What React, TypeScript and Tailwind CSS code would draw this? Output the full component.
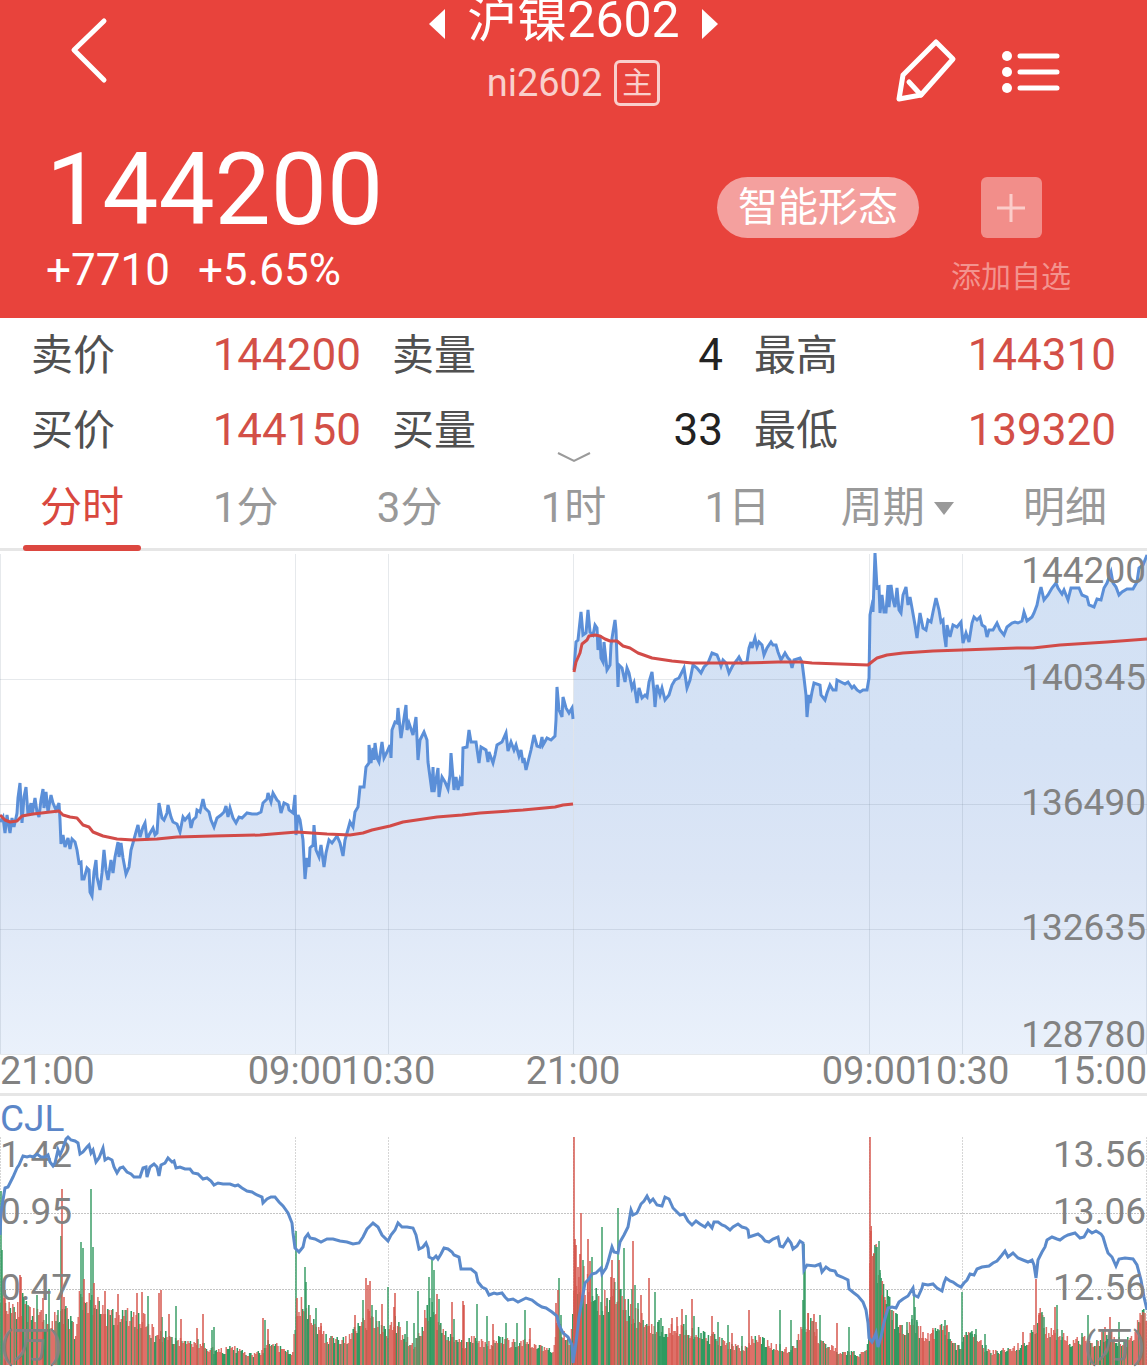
import React from 'react'
import clsx from 'clsx'

const quotes = [
  { label: '卖价', value: '144200', up: true },
  { label: '卖量', value: '4' },
  { label: '最高', value: '144310', up: true },
  { label: '买价', value: '144150', up: true },
  { label: '买量', value: '33' },
  { label: '最低', value: '139320', up: true },
]

const tabs = ['分时', '1分', '3分', '1时', '1日']

const priceLabels = [
  { y: 32, text: '144200' },
  { y: 139, text: '140345' },
  { y: 264, text: '136490' },
  { y: 389, text: '132635' },
  { y: 496, text: '128780' },
]

const timeLabels = [
  { x: 0, text: '21:00', anchor: 'start' },
  { x: 295, text: '09:00', anchor: 'middle' },
  { x: 388, text: '10:30', anchor: 'middle' },
  { x: 573, text: '21:00', anchor: 'middle' },
  { x: 869, text: '09:00', anchor: 'middle' },
  { x: 962, text: '10:30', anchor: 'middle' },
  { x: 1147, text: '15:00', anchor: 'end' },
] as const

const sessionLines = [0.5, 295.5, 388.5, 573.5, 869.5, 962.5, 1146.5]

const firstPrice =
  '0,271 3,266 5,282 7,264 10,282 12,267 14,276 17,262 18,247 20,232 22,272 24,246 26,236 28,264 31,252 32,264 35,247 37,261 39,266 41,249 43,238 44,257 46,241 48,261 51,244 53,252 56,259 59,252 60,269 61,293 63,284 65,296 68,287 70,298 72,288 75,291 77,299 79,312 81,311 82,328 84,328 87,317 89,319 90,341 92,345 94,321 96,309 97,326 100,339 102,322 104,299 106,319 108,329 111,309 113,322 115,306 118,291 119,306 121,292 123,307 126,323 129,316 131,299 133,292 136,281 138,274 140,286 143,276 145,272 147,289 149,284 153,277 155,284 157,282 159,252 162,267 164,269 167,262 168,254 171,266 173,271 177,273 180,281 183,266 185,269 189,264 191,277 193,269 196,266 197,259 200,261 203,248 205,257 209,261 211,269 214,276 217,267 221,264 224,261 226,255 228,266 230,257 233,267 236,272 239,266 242,267 247,262 252,263 257,263 261,261 263,252 267,248 268,242 271,251 273,242 277,249 279,251 281,262 284,252 288,254 289,259 293,262 295,244 296,284 298,264 300,269 303,289 305,328 307,307 309,316 310,297 313,294 314,274 316,299 319,306 321,294 324,316 326,302 329,289 332,292 337,285 340,292 343,305 345,289 347,282 350,271 353,276 355,261 358,256 360,236 364,236 366,216 369,212 369,194 371,212 373,197 374,209 375,192 377,207 379,211 382,191 384,207 387,201 390,194 391,207 392,179 395,171 397,172 398,157 401,187 403,174 406,154 407,179 409,172 413,184 416,166 418,209 420,189 424,181 427,189 428,211 430,226 432,241 433,216 434,241 438,217 439,246 442,226 445,231 448,238 450,224 451,202 454,239 456,226 458,239 460,229 462,235 463,197 467,196 469,179 471,191 476,191 479,212 481,196 486,199 488,211 489,201 493,212 495,204 497,194 502,191 506,182 508,200 511,191 514,199 516,194 519,205 521,199 523,212 524,207 526,219 529,207 531,199 534,184 537,195 540,196 542,186 543,194 547,187 551,189 555,185 556,169 557,136 559,159 562,166 563,146 566,157 569,162 572,157 573,168'

const secondPrice =
  '574,119 576,91 578,89 581,61 583,84 586,82 588,59 590,81 593,84 595,74 597,77 598,99 600,84 601,107 603,111 604,91 607,119 610,114 611,94 613,81 615,69 616,79 618,136 619,114 622,117 625,131 627,117 629,122 632,137 634,132 637,152 639,137 642,147 645,144 647,146 649,131 652,121 654,141 655,156 657,134 660,144 662,137 665,149 669,144 672,134 675,129 679,127 684,117 687,137 690,129 693,114 697,117 701,122 704,116 708,112 712,102 717,104 719,109 721,115 723,109 726,112 729,122 733,114 737,109 739,106 742,112 747,111 749,97 751,91 752,97 755,87 757,96 759,91 762,94 764,104 767,97 771,91 773,94 776,94 778,101 781,109 785,102 788,107 790,109 792,117 794,109 800,107 802,111 804,127 806,144 807,166 809,144 810,152 812,141 814,132 820,134 821,144 825,149 827,142 830,134 833,139 836,139 837,129 841,131 845,133 848,131 852,137 854,135 857,139 860,141 863,139 867,139 869,127 870,64 873,49 873,61 875,2 877,37 879,36 880,62 882,44 884,61 886,61 888,34 889,56 891,34 893,49 895,56 897,37 899,59 901,62 903,44 906,36 908,54 910,46 912,57 915,74 917,87 920,62 923,77 926,79 928,69 931,71 933,61 936,47 939,59 941,71 943,69 944,82 946,96 947,74 950,86 953,74 957,76 961,71 963,92 966,82 969,91 972,72 974,66 977,69 980,66 982,74 985,76 987,86 989,79 993,79 997,72 1000,79 1004,84 1007,76 1012,72 1015,71 1018,72 1022,70 1024,61 1027,70 1032,66 1034,62 1037,54 1039,44 1041,36 1044,49 1048,44 1052,37 1056,32 1058,37 1062,43 1064,39 1068,49 1071,37 1075,37 1079,37 1082,44 1087,46 1089,54 1094,56 1097,48 1101,49 1104,37 1107,32 1111,21 1113,32 1116,36 1119,44 1122,41 1127,38 1133,38 1137,31 1139,17 1143,14 1147,4'

const firstAverage =
  '0,264 5,269 10,271 17,270 22,265 33,263 50,261 59,260 63,264 70,266 77,267 83,274 89,276 93,281 103,285 117,288 133,289 157,288 177,286 213,285 260,284 297,281 327,283 350,284 363,282 372,279 390,275 403,271 437,266 462,264 480,262 523,259 555,256 563,254 573,253'

const secondAverage =
  '574,121 576,111 580,102 582,93 587,89 589,85 595,84 600,85 605,88 610,90 617,90 623,95 630,97 638,102 652,107 672,110 692,112 742,112 778,111 802,111 812,112 868,114 873,110 877,107 887,104 903,102 933,100 962,99 1017,97 1033,97 1060,94 1107,91 1147,88'

const openInterest =
  '0,139 1,117 3,104 5,92 8,91 13,81 17,72 19,69 23,60 27,61 30,60 33,61 37,58 41,61 45,61 48,59 50,66 53,70 55,67 58,54 60,59 63,52 66,43 68,41 71,44 75,45 78,47 80,58 83,56 87,51 89,49 91,57 93,54 96,66 99,62 103,52 105,64 108,62 112,64 114,71 117,77 120,72 123,71 127,76 131,78 134,81 140,81 143,72 146,71 147,81 150,71 154,68 157,71 159,80 161,69 165,67 168,62 172,66 174,65 176,72 180,71 185,73 190,73 193,77 198,78 203,83 207,82 211,85 214,89 218,87 223,88 230,88 235,90 238,89 242,92 247,95 252,96 257,99 262,101 263,107 267,103 271,101 275,101 279,106 283,110 288,117 292,127 293,137 295,152 299,156 303,151 305,142 308,138 310,142 315,143 321,146 327,143 333,143 340,145 347,146 353,148 359,147 363,141 367,133 370,130 373,127 378,131 382,139 388,145 391,139 395,134 398,127 402,131 407,131 413,132 416,139 419,153 423,151 426,147 428,152 429,161 433,163 436,160 438,163 441,158 444,152 448,153 452,156 454,159 459,161 461,173 467,173 471,173 476,177 478,186 482,191 486,193 489,199 494,197 497,198 502,197 505,201 508,204 513,203 518,206 526,202 532,204 537,208 542,211 546,212 552,216 557,220 559,229 563,237 568,241 572,249 573,267 576,247 579,221 582,204 585,187 588,184 592,178 596,177 601,172 602,178 606,172 608,166 612,151 614,156 618,157 620,146 624,139 628,131 631,114 633,119 637,117 641,108 644,105 647,100 650,106 653,103 657,109 662,110 665,101 669,103 673,112 677,116 680,119 684,118 688,125 692,129 696,125 700,128 705,131 708,127 712,132 714,126 718,126 722,129 725,130 730,134 733,131 738,128 742,131 746,132 748,134 749,141 752,140 758,138 762,141 765,145 769,146 773,143 778,141 780,150 783,151 788,143 791,147 793,153 797,150 800,145 803,147 804,174 807,169 815,170 820,168 822,176 826,171 830,174 835,175 837,179 842,181 848,184 849,193 854,197 858,200 863,206 866,214 868,227 869,242 872,246 874,242 876,237 878,251 881,241 884,226 888,212 892,211 896,212 899,206 903,203 908,200 913,192 914,199 918,201 922,192 923,188 928,189 933,188 937,192 942,195 944,187 946,182 950,185 953,186 957,189 961,191 964,187 967,184 970,178 974,179 977,173 982,171 989,170 993,167 997,165 1002,159 1005,155 1008,161 1013,157 1018,162 1023,164 1028,166 1032,164 1034,169 1036,182 1038,164 1042,156 1045,151 1047,144 1052,141 1057,143 1060,144 1064,141 1068,139 1075,137 1080,142 1084,141 1088,134 1092,137 1096,135 1101,138 1103,141 1106,151 1108,157 1112,161 1116,170 1119,163 1125,162 1133,163 1137,169 1141,184 1144,201 1147,214'

// x and usual bar height around it
const volumeTrend = [
  [0, 80], [5, 60], [15, 55], [20, 60], [30, 45], [60, 40], [65, 50], [75, 32],
  [80, 60], [90, 60], [100, 55], [110, 45], [130, 45], [145, 40], [155, 28],
  [165, 28], [180, 22], [200, 20], [215, 13], [235, 15], [250, 9], [262, 12],
  [270, 22], [285, 12], [293, 12], [296, 50], [305, 55], [315, 42], [325, 25],
  [345, 22], [360, 35], [370, 45], [385, 30], [395, 38], [405, 27], [413, 18],
  [420, 28], [430, 60], [438, 40], [450, 25], [465, 20], [475, 25], [490, 18],
  [500, 25], [510, 20], [530, 20], [545, 15], [553, 15], [558, 45], [563, 30],
  [570, 22], [573, 60], [576, 85], [585, 75], [600, 60], [620, 65], [630, 50],
  [645, 40], [660, 35], [680, 32], [695, 30], [715, 25], [730, 18], [745, 15],
  [755, 28], [770, 18], [785, 15], [795, 15], [804, 40], [812, 40], [820, 22],
  [840, 12], [860, 10], [868, 20], [871, 110], [880, 85], [890, 52], [900, 35],
  [915, 40], [925, 25], [945, 35], [957, 15], [970, 30], [980, 20], [990, 12],
  [1005, 13], [1020, 18], [1030, 25], [1040, 45], [1050, 30], [1060, 28],
  [1070, 20], [1085, 25], [1095, 18], [1105, 30], [1115, 25], [1125, 20],
  [1135, 30], [1147, 55],
]

const redSpikes = [
  [5, 75], [20, 90], [21, 88], [43, 67], [62, 176], [64, 68], [84, 86], [94, 82],
  [105, 74], [118, 71], [137, 72], [142, 73], [159, 72], [161, 75], [169, 51],
  [181, 46], [197, 37], [203, 51], [263, 47], [268, 36], [297, 67], [321, 42],
  [355, 50], [366, 87], [368, 80], [370, 84], [382, 61], [394, 58], [395, 72],
  [437, 71], [452, 63], [463, 64], [464, 60], [493, 41], [530, 37], [556, 62],
  [558, 75], [574, 228], [575, 126], [576, 120], [578, 98], [580, 111],
  [581, 152], [588, 126], [590, 104], [611, 88], [612, 105], [614, 87],
  [619, 105], [625, 66], [633, 124], [641, 70], [649, 87], [672, 47], [677, 48],
  [682, 56], [692, 66], [712, 49], [732, 32], [749, 55], [808, 52], [814, 51],
  [816, 43], [837, 42], [870, 228], [871, 134], [874, 112], [882, 70], [885, 65],
  [900, 40], [923, 33], [933, 35], [947, 40], [1023, 33], [1036, 86], [1039, 50],
  [1040, 52], [1055, 58], [1105, 38], [1110, 48], [1140, 42], [1143, 53],
]

const greenSpikes = [
  [1, 174], [2, 115], [28, 60], [37, 70], [49, 76], [58, 55], [61, 129],
  [81, 123], [83, 117], [91, 176], [93, 118], [126, 55], [148, 69], [162, 48],
  [176, 59], [212, 35], [214, 38], [265, 45], [296, 134], [305, 98], [306, 83],
  [316, 57], [363, 65], [372, 60], [376, 55], [388, 78], [407, 44], [414, 42],
  [418, 74], [429, 88], [432, 106], [434, 95], [439, 66], [454, 46], [477, 61],
  [487, 49], [506, 42], [517, 42], [525, 55], [559, 87], [561, 50], [583, 105],
  [592, 108], [597, 71], [602, 138], [607, 67], [618, 157], [624, 117],
  [632, 76], [635, 80], [638, 62], [655, 73], [661, 47], [686, 50], [694, 49],
  [718, 43], [728, 40], [742, 29], [764, 27], [780, 55], [791, 45], [803, 65],
  [804, 121], [805, 95], [820, 50], [849, 38], [876, 118], [877, 118], [879, 124],
  [880, 95], [888, 66], [892, 55], [907, 43], [912, 50], [914, 70], [915, 58],
  [917, 43], [939, 35], [945, 45], [962, 73], [972, 34], [976, 36], [985, 31],
  [1042, 53], [1044, 48], [1057, 60], [1062, 35], [1082, 32], [1088, 50],
  [1119, 43],
]

const VOLUME_BASE = 269

function trendAt(x: number) {
  const next = volumeTrend.findIndex(([px]) => px >= x)
  if (next <= 0) return volumeTrend[0][1]
  const [x0, h0] = volumeTrend[next - 1]
  const [x1, h1] = volumeTrend[next]
  return h0 + ((h1 - h0) * (x - x0)) / (x1 - x0)
}

function barPath(bars: number[][]) {
  return bars.map(([x, h]) => `M${x} ${VOLUME_BASE}v${-h}`).join('')
}

function buildVolume() {
  const red: number[][] = []
  const green: number[][] = []
  let seed = 11
  const random = () => {
    seed = (seed * 16807) % 2147483647
    return seed / 2147483647
  }
  // one bar a minute, 465 minutes in a trading day
  for (let i = 0; i < 930; i++) {
    const x = Math.round((i * 1147 * 100) / 930) / 100 + 0.5
    const height = trendAt(Math.min(x, 1147)) * (0.8 + random() * 0.5)
    const bar = [x, Math.round(height)]
    if (random() > 0.38) red.push(bar)
    else green.push(bar)
  }
  return { red: barPath(red), green: barPath(green) }
}

const volume = buildVolume()

function PriceChart() {
  return (
    <svg
      viewBox="0 0 1147 542"
      className="block w-full h-auto"
      role="img"
      aria-label="分时走势"
    >
      <defs>
        <linearGradient
          id="area"
          gradientUnits="userSpaceOnUse"
          x1="0"
          y1="0"
          x2="0"
          y2="503"
        >
          <stop offset="0" stopColor="#d2e1f4" />
          <stop offset="0.4" stopColor="#d5e2f5" />
          <stop offset="0.65" stopColor="#dce6f6" />
          <stop offset="1" stopColor="#eaf1fb" />
        </linearGradient>
      </defs>
      <polygon points={`0,503 ${firstPrice} 573,503`} fill="url(#area)" />
      <polygon points={`573,503 ${secondPrice} 1147,503`} fill="url(#area)" />
      <g stroke="#64748b" strokeOpacity="0.16" strokeWidth="1">
        {sessionLines.map((x) => (
          <line key={x} x1={x} x2={x} y1="3" y2="503" />
        ))}
        {[128.5, 253.5, 378.5, 503.5].map((y) => (
          <line key={y} x1="0" x2="1147" y1={y} y2={y} />
        ))}
      </g>
      <g fill="none" strokeWidth="3">
        <polyline points={firstPrice} stroke="#5b8fd8" />
        <polyline points={secondPrice} stroke="#5b8fd8" />
        <g stroke="#d24b48" strokeLinejoin="round">
          <polyline points={firstAverage} />
          <polyline points={secondAverage} />
        </g>
      </g>
      <g fill="#828282">
        <g fontSize="37" textAnchor="end">
          {priceLabels.map(({ y, text }) => (
            <text key={text} x="1146" y={y}>
              {text}
            </text>
          ))}
        </g>
        <g fontSize="38">
          {timeLabels.map(({ x, text, anchor }) => (
            <text key={x} x={x} y="533" textAnchor={anchor}>
              {text}
            </text>
          ))}
        </g>
      </g>
    </svg>
  )
}

function VolumeChart() {
  return (
    <svg
      viewBox="0 0 1147 273"
      className="block w-full h-auto"
      role="img"
      aria-label="成交量"
    >
      <g stroke="#c4c4c4" strokeWidth="1" strokeDasharray="2 1">
        {sessionLines.map((x) => (
          <line key={x} x1={x} x2={x} y1="41" y2="269" strokeOpacity="0.7" />
        ))}
        {[117.5, 193.5].map((y) => (
          <line key={y} x1="0" x2="1147" y1={y} y2={y} />
        ))}
      </g>
      <g fill="none" strokeWidth="1.5">
        <path d={volume.green} stroke="#2f9a60" />
        <path d={volume.red} stroke="#d64c42" strokeOpacity="0.8" />
        <path d={barPath(greenSpikes)} stroke="#3c9f68" />
        <path d={barPath(redSpikes)} stroke="#d6584f" />
      </g>
      <g fill="#828282" fontSize="37">
        <text x="0" y="71">1.42</text>
        <text x="0" y="128">0.95</text>
        <text x="0" y="204">0.47</text>
        <text x="0" y="262">(万)</text>
      </g>
      <polyline
        points={openInterest}
        fill="none"
        stroke="#5b8acb"
        strokeWidth="3"
      />
      <g fill="#828282" fontSize="37" textAnchor="end">
        <text x="1146" y="71">13.56</text>
        <text x="1146" y="128">13.06</text>
        <text x="1146" y="204">12.56</text>
        <text x="1146" y="262">(万)</text>
      </g>
      <text x="0" y="35" fill="#5b86c8" fontSize="37">CJL</text>
    </svg>
  )
}

function Header() {
  return (
    <header className="bg-[#e8433c] text-white pb-[26px]">
      <div className="grid grid-cols-[1fr_auto_1fr] items-start">
        <button aria-label="返回" className="justify-self-start pl-[70px] pt-4">
          <svg width="40" height="68" viewBox="0 0 40 68" fill="none">
            <path
              d="M34 5 4 34 34 64"
              stroke="currentColor"
              strokeWidth="5"
              strokeLinecap="round"
              strokeLinejoin="round"
            />
          </svg>
        </button>
        <div className="flex flex-col items-center gap-5">
          <div className="flex items-center h-10 gap-[22px]">
            <button aria-label="上一个" className="pt-2">
              <svg width="16" height="30" viewBox="0 0 16 30">
                <path d="M16 0 0 15l16 15z" fill="currentColor" />
              </svg>
            </button>
            <h1 className="text-[50px] leading-10 whitespace-nowrap">
              沪镍2602
            </h1>
            <button aria-label="下一个" className="pt-2">
              <svg width="16" height="30" viewBox="0 0 16 30">
                <path d="m0 0 16 15L0 30z" fill="currentColor" />
              </svg>
            </button>
          </div>
          <div className="flex items-center gap-3 text-[#f9cfcc]">
            <span className="text-[38px] leading-[46px]">ni2602</span>
            <span className="flex items-center justify-center w-[46px] h-[46px] text-[30px] leading-none border-[3px] border-[#f9cfcc] rounded-md">
              主
            </span>
          </div>
        </div>
        <div className="flex gap-11 justify-self-end pt-[38px] pr-[86px]">
          <button aria-label="画线">
            <svg width="62" height="66" viewBox="0 0 62 66" fill="none">
              <g stroke="currentColor" strokeWidth="5" strokeLinejoin="round">
                <path d="M41 4 58 21 26 57 4 61 8 37z" />
                <path d="M14 44 26 57" strokeLinecap="round" />
              </g>
            </svg>
          </button>
          <button aria-label="菜单" className="pt-2 self-start">
            <svg width="60" height="52" viewBox="0 0 60 52">
              <g fill="currentColor">
                <circle cx="6" cy="10" r="5" />
                <circle cx="6" cy="26" r="5" />
                <circle cx="6" cy="42" r="5" />
              </g>
              <path
                d="M19 10h37M19 26h37M19 42h37"
                stroke="currentColor"
                strokeWidth="5"
                strokeLinecap="round"
              />
            </svg>
          </button>
        </div>
      </div>

      <div className="flex items-start justify-between pt-[34px] pl-[46px] pr-[76px]">
        <div>
          <p className="text-[100px] leading-[100px]">144200</p>
          <p className="flex gap-7 mt-2 text-[44px] leading-[44px]">
            <span>+7710</span>
            <span>+5.65%</span>
          </p>
        </div>
        <div className="flex items-start gap-8 pt-[37px]">
          <button className="px-[21px] text-[40px] leading-[61px] bg-[#f4a09e] rounded-full">
            智能形态
          </button>
          <button className="flex flex-col items-center gap-6 text-[#f3938e]">
            <span className="flex items-center justify-center w-[61px] h-[61px] bg-[#f28e8a] rounded-md">
              <svg width="30" height="30" viewBox="0 0 30 30">
                <path d="M1 15h28M15 1v28" stroke="#fbcdca" strokeWidth="3" />
              </svg>
            </span>
            <span className="text-[30px] leading-[30px]">添加自选</span>
          </button>
        </div>
      </div>
    </header>
  )
}

export default function App() {
  const [active, setActive] = React.useState('分时')

  return (
    <main className="bg-white font-[Roboto,'Noto_Sans_CJK_SC',sans-serif]">
      <Header />

      <section className="relative pt-0.5">
        <dl className="grid grid-cols-[330fr_331fr_362fr] gap-x-[31px] gap-y-1 px-[31px]">
          {quotes.map(({ label, value, up }) => (
            <div
              key={label}
              className="flex items-baseline justify-between leading-[71px]"
            >
              <dt className="text-[42px] text-[#505050]">{label}</dt>
              <dd
                className={clsx(
                  'text-[44px]',
                  up ? 'text-[#d34f47]' : 'text-[#222222]',
                )}
              >
                {value}
              </dd>
            </div>
          ))}
        </dl>
        <button
          aria-label="展开"
          className="absolute bottom-0 -translate-x-1/2 left-1/2"
        >
          <svg width="34" height="14" viewBox="0 0 34 14" fill="none">
            <path d="m1 1 16 8L33 1" stroke="#9a9a9a" strokeWidth="2" />
          </svg>
        </button>
      </section>

      <nav className="grid grid-cols-7 pt-0.5 text-[42px] leading-[80px] text-[#999999] border-b-[3px] border-[#e6e6e6]">
        {tabs.map((tab) => (
          <button
            key={tab}
            onClick={() => setActive(tab)}
            className={clsx('relative', active === tab && 'text-[#d9483f]')}
          >
            {tab}
            {active === tab && (
              <span className="absolute -bottom-[3px] left-1/2 -translate-x-1/2 w-[118px] h-[6px] bg-[#dc4740] rounded-full" />
            )}
          </button>
        ))}
        <label className="flex items-center justify-center gap-2 pr-2">
          <select aria-label="周期" className="h-20 appearance-none">
            <option>周期</option>
            <option>周线</option>
            <option>月线</option>
          </select>
          <svg width="20" height="13" viewBox="0 0 20 13">
            <path d="M0 0h20L10 13z" fill="currentColor" />
          </svg>
        </label>
        <button>明细</button>
      </nav>

      <PriceChart />
      <div className="h-[3px] bg-[#e6e6e6]" />
      <VolumeChart />
    </main>
  )
}
